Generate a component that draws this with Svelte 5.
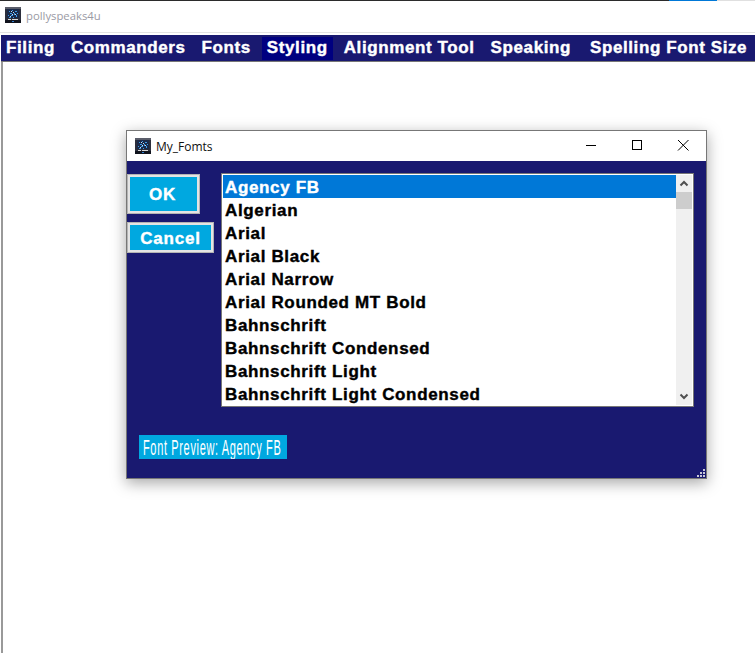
<script>
  const fonts = [
    'Agency FB',
    'Algerian',
    'Arial',
    'Arial Black',
    'Arial Narrow',
    'Arial Rounded MT Bold',
    'Bahnschrift',
    'Bahnschrift Condensed',
    'Bahnschrift Light',
    'Bahnschrift Light Condensed'
  ];
  const menus = ['Filing', 'Commanders', 'Fonts', 'Styling', 'Alignment Tool', 'Speaking', 'Spelling Font Size'];
  let selected = $state('Agency FB');
</script>

{#snippet appIcon()}
  <svg class="app-icon" viewBox="0 0 16 16" width="16" height="16" aria-hidden="true">
    <rect width="16" height="16" fill="#2b2e3c" />
    <rect width="16" height="2" fill="#5a5d6a" />
    <rect x="2" y="2" width="12" height="9" fill="#1a2a4a" />
    <path d="M4 4h1v1H4zM7 3h1v1H7zM10 4h2v1h-2zM5 6h2v1H5zM9 6h1v2H9zM12 6h1v1h-1zM3 8h1v1H3zM6 8h2v1H6zM11 8h1v2h-1zM8 10h1v1H8zM4 10h2v1H4z" fill="#3f9be8" />
    <path d="M6 4h1v1H6zM8 5h1v1H8zM7 7h1v1H7zM10 7h1v1h-1zM5 9h1v1H5z" fill="#bfe0fb" />
    <rect x="3" y="12" width="3" height="1" fill="#d8d8d8" />
    <rect x="7" y="12" width="6" height="1" fill="#d8d8d8" />
    <rect y="13" width="16" height="3" fill="#10131d" />
    <rect x="7" y="14" width="2" height="1" fill="#2f7fd0" />
  </svg>
{/snippet}

<div class="app">
  <div class="top-line"><span class="top-accent"></span><span class="top-rest"></span></div>
  <header class="titlebar">
    {@render appIcon()}
    <span>pollyspeaks4u</span>
  </header>
  <nav class="menubar">
    {#each menus as m}
      <span class="menu" class:active={m === 'Styling'}>{m}</span>
    {/each}
  </nav>
  <main class="desktop">
    <section class="window">
      <div class="win-title">
        {@render appIcon()}
        <span class="win-name">My_Fomts</span>
        <div class="win-controls">
          <svg viewBox="0 0 46 30" width="46" height="30" aria-hidden="true"><path d="M18 14.500h10" stroke="#000" fill="none" /></svg>
          <svg viewBox="0 0 46 30" width="46" height="30" aria-hidden="true"><rect x="18.500" y="9.500" width="9" height="9" stroke="#000" fill="none" /></svg>
          <svg viewBox="0 0 46 30" width="46" height="30" aria-hidden="true"><path d="M18 9l10.500 10.500M28.500 9L18 19.500" stroke="#000" fill="none" /></svg>
        </div>
      </div>
      <div class="win-body">
        <div class="content">
          <div class="buttons">
            <button class="btn ok">OK</button>
            <button class="btn cancel">Cancel</button>
          </div>
          <div class="listbox">
            <ul class="items">
              {#each fonts as f}
                <li class:sel={f === selected}>{f}</li>
              {/each}
            </ul>
            <div class="scrollbar">
              <svg viewBox="0 0 16 17" width="16" height="17" aria-hidden="true"><path d="M4.500 10.500L8 7l3.500 3.500" stroke="#505050" stroke-width="2" fill="none" /></svg>
              <div class="thumb"></div>
              <div class="track"></div>
              <svg viewBox="0 0 16 17" width="16" height="17" aria-hidden="true"><path d="M4.500 6.500L8 10l3.500-3.500" stroke="#505050" stroke-width="2" fill="none" /></svg>
            </div>
          </div>
        </div>
        <div class="preview"><span>Font Preview: {selected}</span></div>
        <svg class="grip" viewBox="0 0 8 8" width="8" height="8" aria-hidden="true">
          <path d="M6 0h2v2H6zM3 3h2v2H3zM6 3h2v2H6zM0 6h2v2H0zM3 6h2v2H3zM6 6h2v2H6z" fill="#c8c8d8" />
        </svg>
      </div>
    </section>
  </main>
</div>

<style>
  :global(body) {
    margin: 0;
    background: #fff;
  }

  .app {
    width: 755px;
    height: 653px;
    display: flex;
    flex-direction: column;
    overflow: hidden;
    font-family: "Liberation Sans", Arial, sans-serif;
  }

  .top-line {
    height: 1px;
    background: #2b2b2b;
    display: flex;
    justify-content: flex-end;
    flex: none;
  }
  .top-accent {
    width: 48px;
    background: #0078d7;
  }
  .top-rest {
    width: 38px;
    background: #e0e0e0;
  }

  .titlebar {
    height: 32px;
    flex: none;
    display: flex;
    align-items: center;
    gap: 5px;
    padding: 0 0 3px 5px;
    border-bottom: 1px solid #e3e3e3;
    box-sizing: border-box;
    font-family: "Open Sans", "Noto Sans", sans-serif;
    font-size: 11.3px;
    color: #9a9aa4;
  }

  .menubar {
    margin-top: 2px;
    margin-left: 1px;
    height: 26px;
    flex: none;
    display: flex;
    align-items: center;
    background: #191970;
    border-bottom: 1px solid #777;
    white-space: nowrap;
  }
  .menu {
    padding: 0 5px;
    margin-right: 6px;
    height: 23px;
    line-height: 21px;
    color: #fff;
    font-weight: 700;
    font-size: 17px;
    letter-spacing: 0.6px;
    -webkit-text-stroke: 0.4px currentColor;
  }
  .menu:last-child {
    margin-left: 3px;
  }
  .menu.active {
    background: #000080;
  }

  .desktop {
    position: relative;
    flex: 1;
    border-left: 2px solid #999;
    margin-left: 1px;
  }

  .window {
    position: absolute;
    left: 123px;
    top: 68px;
    width: 581px;
    height: 349px;
    box-sizing: border-box;
    border: 1px solid #777;
    background: #fff;
    display: flex;
    flex-direction: column;
    box-shadow: 0 4px 14px rgba(0, 0, 0, 0.35);
  }

  .win-title {
    height: 30px;
    flex: none;
    display: flex;
    align-items: center;
    padding-left: 8px;
    gap: 5px;
  }
  .win-name {
    font-family: "Open Sans", "Noto Sans", sans-serif;
    font-size: 12px;
    color: #111;
  }
  .win-controls {
    margin-left: auto;
    display: flex;
  }
  .win-controls svg {
    display: block;
  }

  .win-body {
    position: relative;
    flex: 1;
    background: #191970;
    padding: 12px 12px 0 0;
  }

  .content {
    display: flex;
    gap: 7px;
  }

  .buttons {
    width: 87px;
    flex: none;
    display: flex;
    flex-direction: column;
    align-items: flex-start;
    gap: 8px;
    padding-top: 1px;
  }
  .btn {
    display: block;
    box-sizing: border-box;
    padding: 0;
    background: #00a8e0;
    color: #fff;
    font-family: inherit;
    font-weight: 700;
    font-size: 17px;
    letter-spacing: 0.8px;
    -webkit-text-stroke: 0.4px currentColor;
    border: 3px solid #e4e4e4;
    outline: 1px solid #b4b4b4;
    outline-offset: -1px;
  }
  .ok {
    width: 73px;
    height: 40px;
    padding: 2px 2px 0 0;
  }
  .cancel {
    width: 87px;
    height: 31px;
    padding-top: 2px;
  }

  .listbox {
    flex: 1;
    height: 234px;
    box-sizing: border-box;
    border: 1px solid #777;
    background: #fff;
    padding: 1px;
    display: flex;
  }
  .items {
    list-style: none;
    margin: 0;
    padding: 0;
    flex: 1;
    min-width: 0;
  }
  .items li {
    height: 23px;
    line-height: 25px;
    padding-left: 2px;
    font-size: 17px;
    font-weight: 700;
    letter-spacing: 0.65px;
    -webkit-text-stroke: 0.4px currentColor;
    color: #000;
    white-space: nowrap;
  }
  .items li.sel {
    background: #0078d7;
    color: #fff;
  }

  .scrollbar {
    width: 16px;
    flex: none;
    background: #f0f0f0;
    display: flex;
    flex-direction: column;
  }
  .scrollbar svg {
    display: block;
    flex: none;
  }
  .thumb {
    height: 17px;
    flex: none;
    background: #cdcdcd;
  }
  .track {
    flex: 1;
  }

  .preview {
    margin: 28px 0 0 12px;
    width: 148px;
    height: 24px;
    box-sizing: border-box;
    padding: 2px 0 0 4px;
    background: #00a8e0;
    overflow: hidden;
    display: flex;
    align-items: center;
  }
  .preview span {
    display: inline-block;
    color: #fff;
    font-family: "Liberation Sans", sans-serif;
    font-size: 22px;
    letter-spacing: 1.3px;
    white-space: nowrap;
    transform: scaleX(0.5);
    transform-origin: left center;
  }

  .grip {
    position: absolute;
    right: 1px;
    bottom: 1px;
  }
</style>
